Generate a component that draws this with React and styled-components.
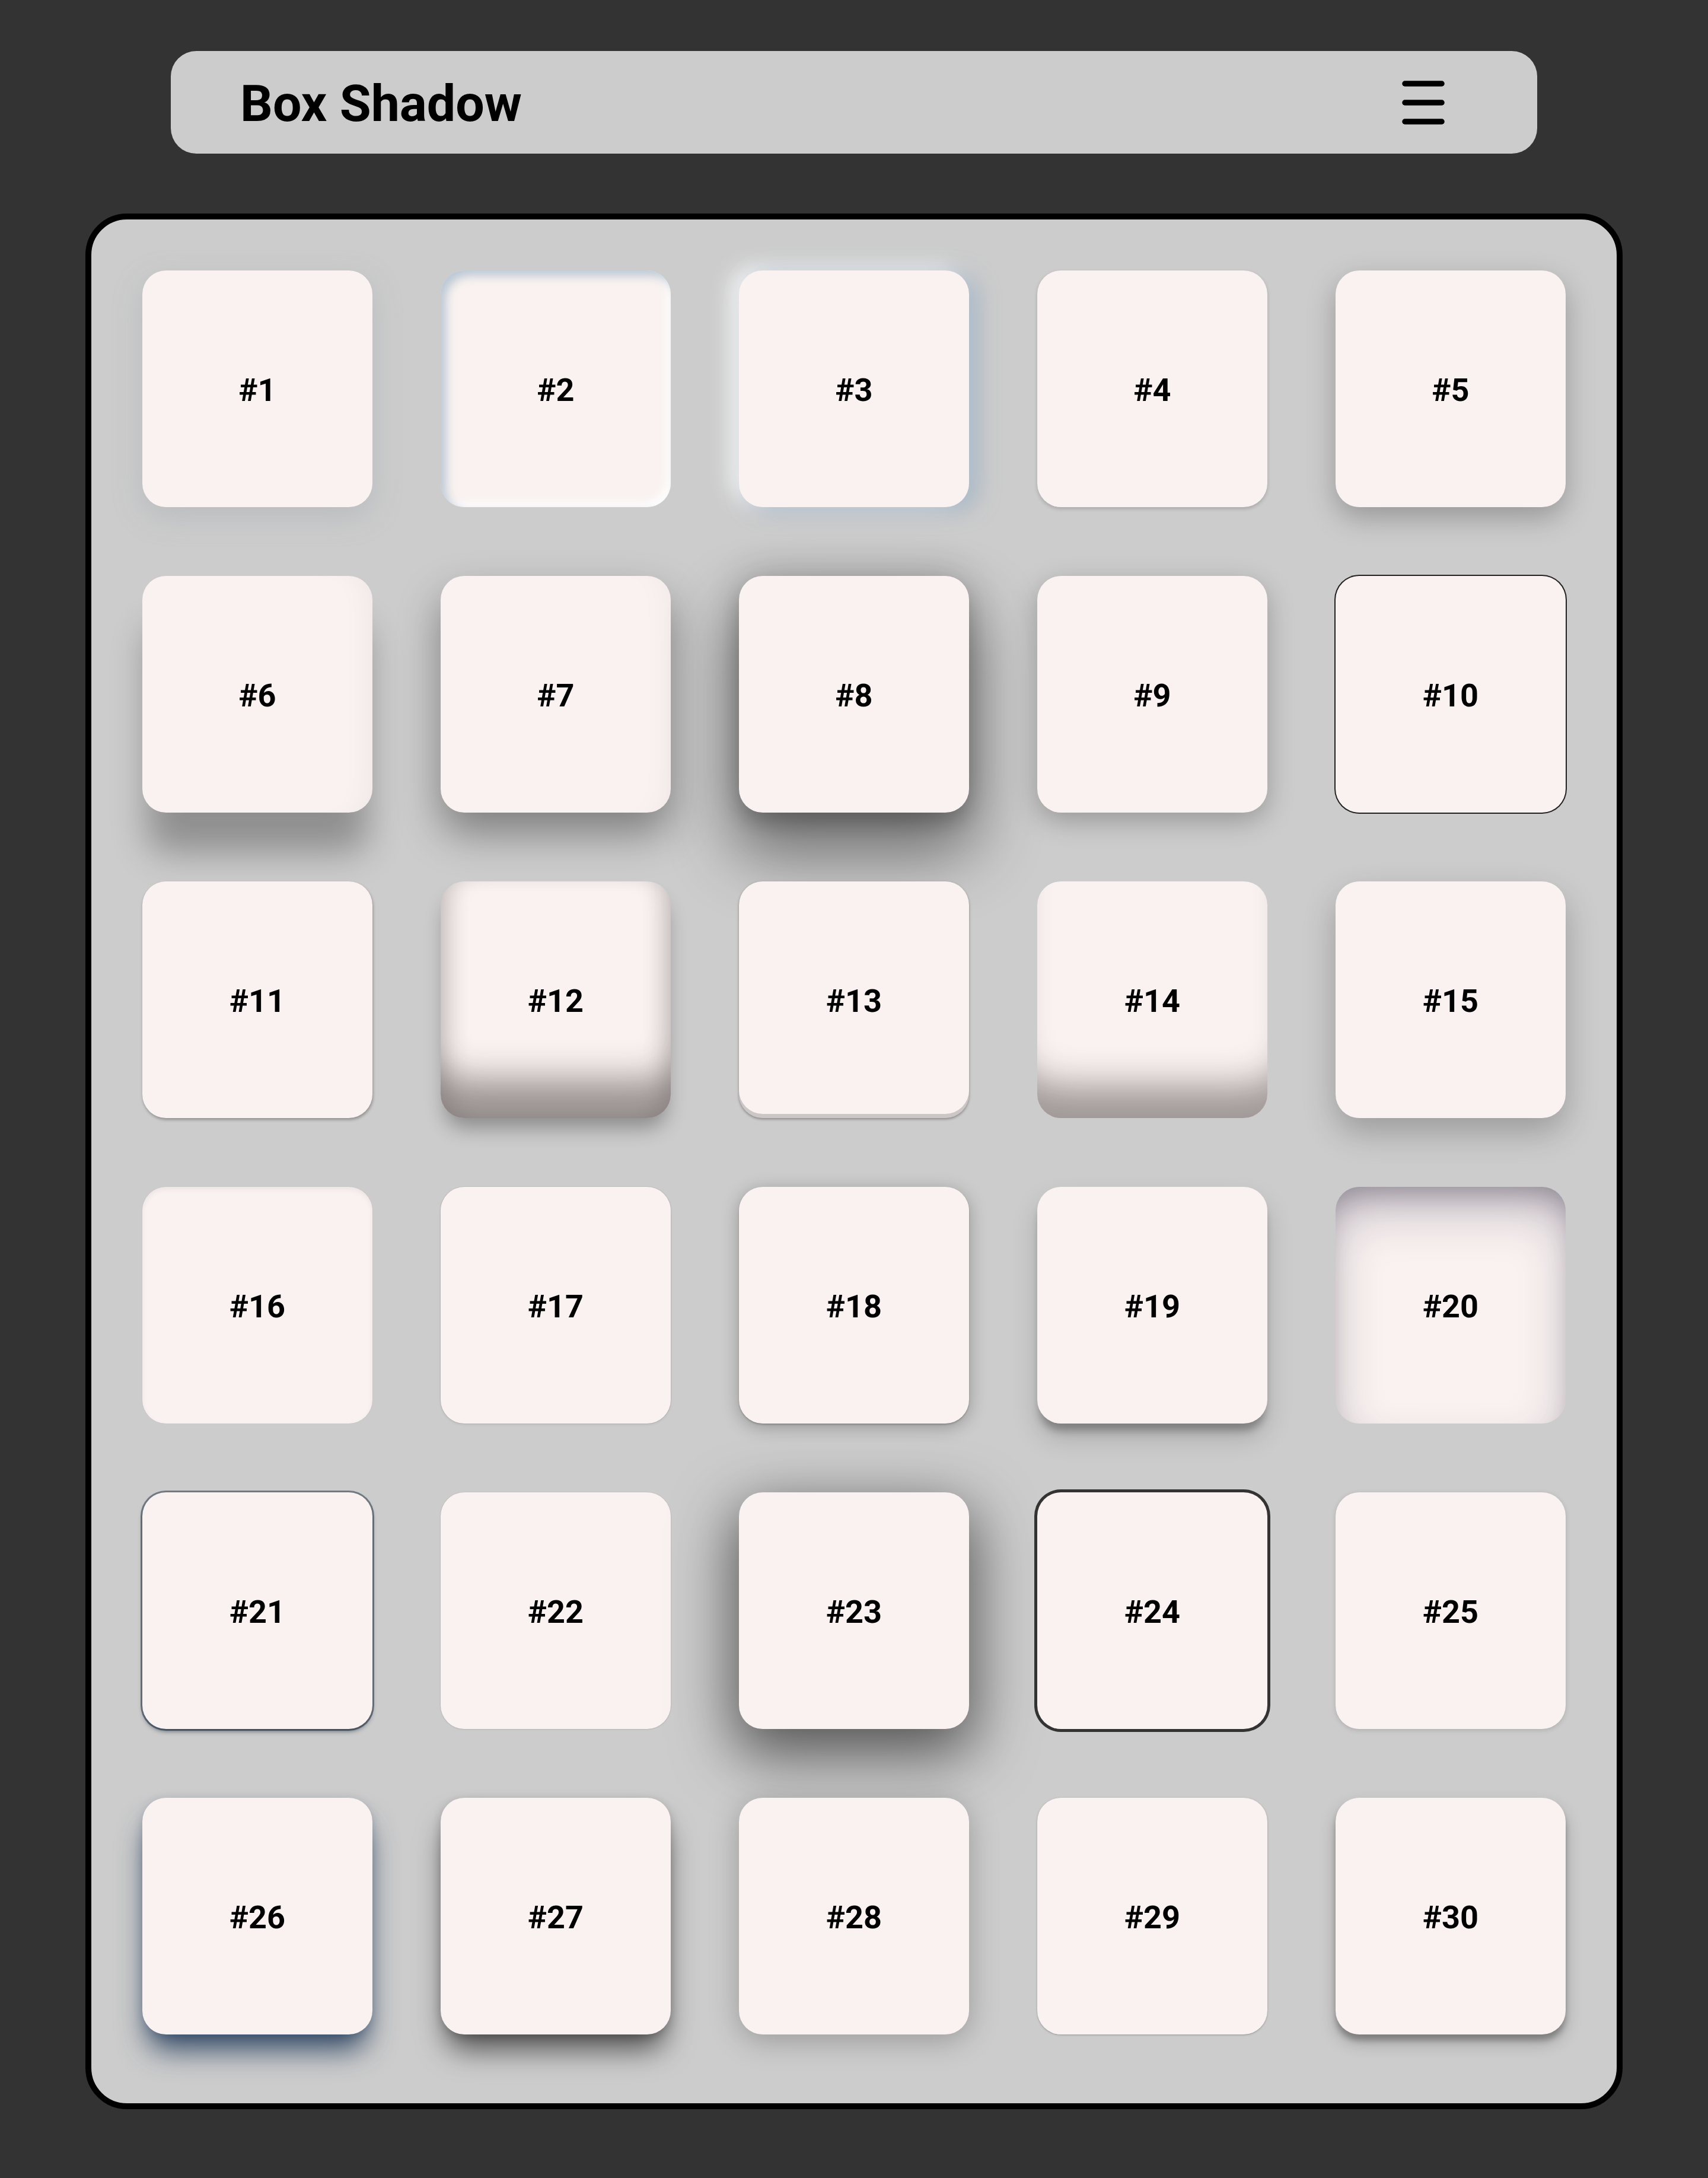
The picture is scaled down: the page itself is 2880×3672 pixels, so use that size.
import React from "react";
import styled, { createGlobalStyle } from "styled-components";

const shadows = [
  "0 16px 48px rgba(149, 157, 165, 0.35)",
  "inset 9px 9px 16px rgba(136, 165, 191, 0.55), inset -8px -8px 14px rgba(255, 255, 255, 0.85)",
  "14px 6px 36px rgba(136, 165, 191, 0.6), -14px -6px 36px rgba(255, 255, 255, 0.85)",
  "0 3px 6px rgba(0, 0, 0, 0.18)",
  "0 18px 48px rgba(0, 0, 0, 0.26)",
  "0 75px 60px -8px rgba(0, 0, 0, 0.3), inset -40px 0 50px -35px rgba(0, 0, 0, 0.05)",
  "0 35px 70px rgba(0, 0, 0, 0.38), inset -40px 0 50px -35px rgba(0, 0, 0, 0.04)",
  "0 60px 110px 12px rgba(0, 0, 0, 0.45), 0 -10px 60px rgba(0, 0, 0, 0.14), 0 20px 30px rgba(0, 0, 0, 0.15)",
  "0 14px 45px rgba(0, 0, 0, 0.26)",
  "0 0 0 2px #222",
  "1px 3px 5px rgba(0, 0, 0, 0.3)",
  "inset 0 -85px 60px -20px rgba(40, 30, 30, 0.45), inset 30px 0 38px -18px rgba(0, 0, 0, 0.12), inset -30px 0 38px -18px rgba(0, 0, 0, 0.12), 0 24px 34px -8px rgba(0, 0, 0, 0.32)",
  "inset 0 -7px 0 rgba(0, 0, 0, 0.18), 0 2px 4px rgba(0, 0, 0, 0.35)",
  "inset 0 -95px 60px -40px rgba(40, 30, 30, 0.42)",
  "0 24px 55px rgba(0, 0, 0, 0.24)",
  "inset 0 4px 10px rgba(0, 0, 0, 0.06), 0 0 0 1px rgba(0, 0, 0, 0.02)",
  "0 0 0 1px rgba(0, 0, 0, 0.06), 0 2px 4px rgba(0, 0, 0, 0.08)",
  "0 6px 30px rgba(0, 0, 0, 0.27), 0 2px 3px rgba(0, 0, 0, 0.2)",
  "0 16px 14px -4px rgba(0, 0, 0, 0.27), 0 24px 44px rgba(0, 0, 0, 0.17)",
  "inset 0 45px 90px -14px rgba(50, 40, 80, 0.32), inset 0 28px 52px -24px rgba(0, 0, 0, 0.32)",
  "0 0 0 3px rgba(6, 24, 44, 0.45), 0 5px 8px -2px rgba(6, 24, 44, 0.65), inset 0 1px 0 rgba(255, 255, 255, 0.08)",
  "0 0 0 1px rgba(0, 0, 0, 0.04), 0 1px 3px rgba(0, 0, 0, 0.08)",
  "0 34px 100px 10px rgba(0, 0, 0, 0.58)",
  "0 0 0 5px #333",
  "0 2px 8px rgba(0, 0, 0, 0.15)",
  "0 34px 50px -10px rgba(30, 55, 88, 0.9), 0 4px 16px rgba(30, 55, 88, 0.2)",
  "0 34px 50px -10px rgba(0, 0, 0, 0.62), 0 4px 16px rgba(0, 0, 0, 0.18)",
  "0 10px 50px rgba(0, 0, 0, 0.25)",
  "0 1px 4px rgba(0, 0, 0, 0.12), 0 1px 2px rgba(0, 0, 0, 0.18)",
  "0 14px 28px rgba(0, 0, 0, 0.22), 0 10px 10px rgba(0, 0, 0, 0.24)",
];

export default function App() {
  return (
    <>
      <GlobalStyle />
      <Page>
        <Header>
          <Title>Box Shadow</Title>
          <MenuButton aria-label="menu">
            <svg width="72" height="74" viewBox="0 0 72 74">
              <g stroke="#000" strokeWidth="9.5" strokeLinecap="round">
                <line x1="5" y1="5" x2="67" y2="5" />
                <line x1="5" y1="37" x2="67" y2="37" />
                <line x1="5" y1="69" x2="67" y2="69" />
              </g>
            </svg>
          </MenuButton>
        </Header>

        <Board>
          {shadows.map((shadow, i) => (
            <Card key={i} $shadow={shadow}>
              #{i + 1}
            </Card>
          ))}
        </Board>
      </Page>
    </>
  );
}

const GlobalStyle = createGlobalStyle`
  body {
    margin: 0;
    background: #333;
    font-family: Roboto, "Liberation Sans", Arial, sans-serif;
  }
`;

const Page = styled.div`
  display: flex;
  flex-direction: column;
  align-items: center;
  padding: 86px 0 115px;
`;

const Header = styled.header`
  width: 80%;
  height: 173px;
  box-sizing: border-box;
  display: flex;
  align-items: center;
  justify-content: space-between;
  padding: 4px 156px 0 117px;
  background: #ccc;
  border-radius: 43px;
`;

const Title = styled.h1`
  margin: 0;
  font-size: 86px;
  font-weight: 700;
  color: #000;
`;

const MenuButton = styled.div`
  display: flex;
  align-items: center;
  margin-top: -4px;
`;

const Board = styled.main`
  width: 90%;
  box-sizing: border-box;
  margin-top: 101px;
  padding: 86px 0 116px;
  background: #ccc;
  border: 10px solid #000;
  border-radius: 70px;
  display: grid;
  grid-template-columns: repeat(5, 388px);
  grid-auto-rows: 399px;
  column-gap: 115px;
  row-gap: 116px;
  justify-content: center;
`;

const Card = styled.div`
  display: flex;
  align-items: center;
  justify-content: center;
  padding-top: 4px;
  background: #f9f2f0;
  border-radius: 40px;
  box-shadow: ${(p) => p.$shadow};
  font-size: 54px;
  font-weight: 700;
  color: #000;
`;
